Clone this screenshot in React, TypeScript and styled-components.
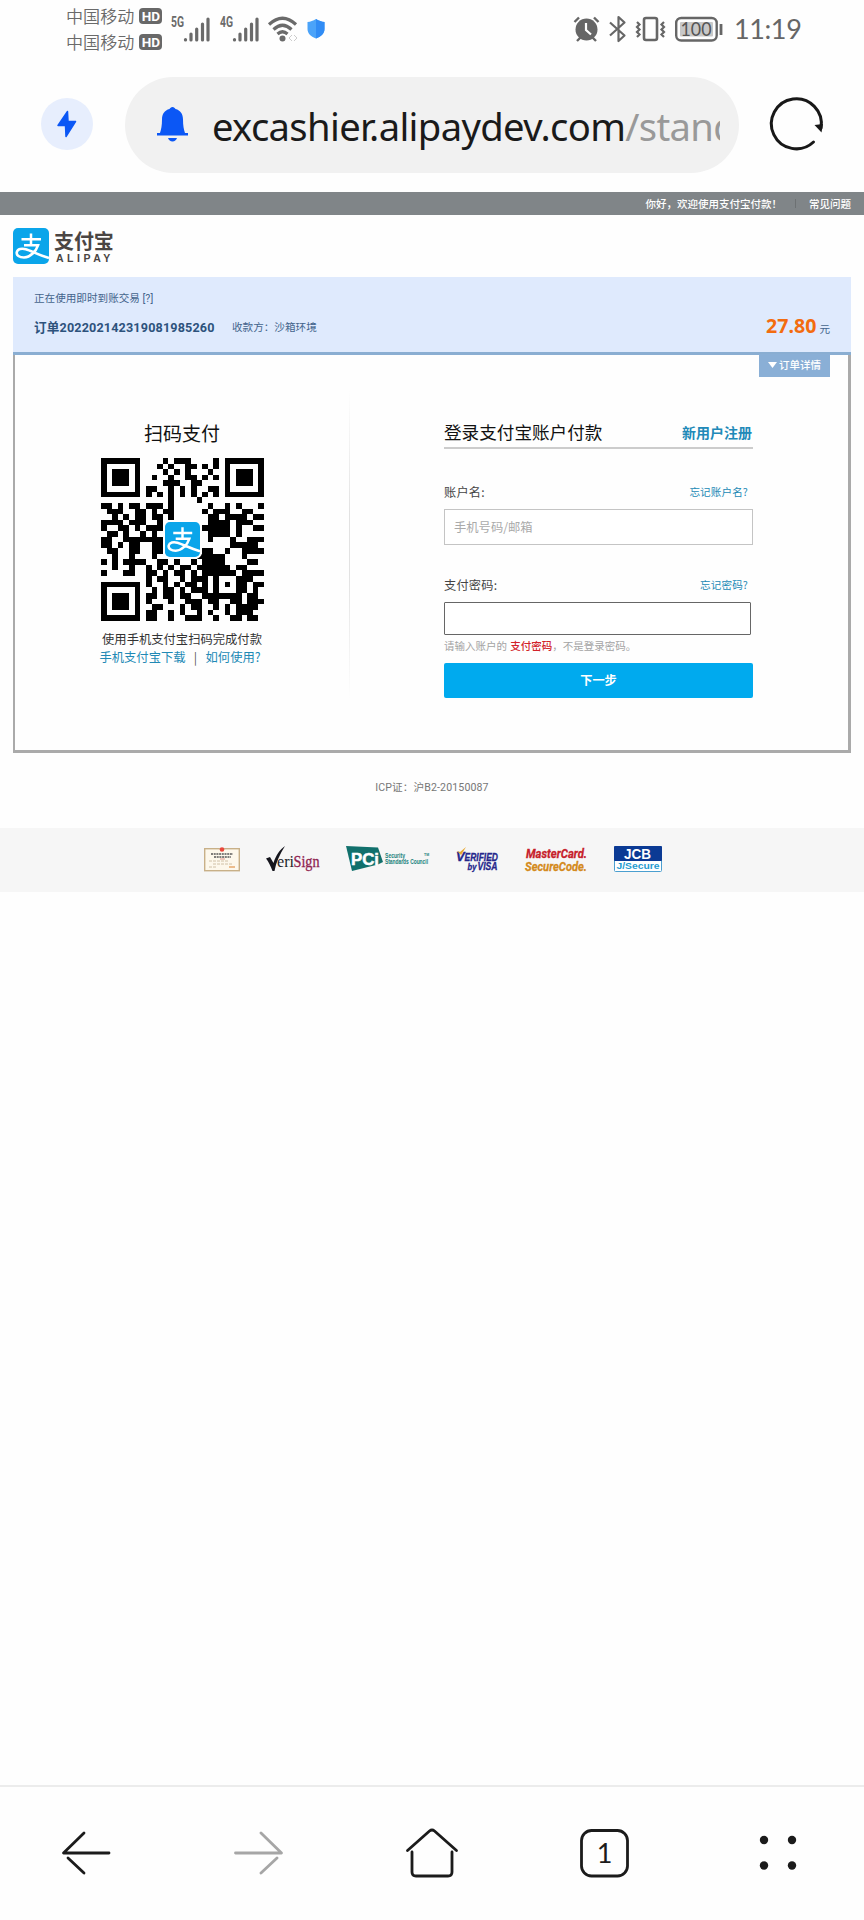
import React from 'react';
import styled, { createGlobalStyle } from 'styled-components';

const Global = createGlobalStyle`
  *, *::before, *::after { box-sizing: border-box; }
  body { margin: 0; background: #fefefe; font-family: Roboto, "Noto Sans CJK SC", sans-serif; color: #333; }
  a { text-decoration: none; color: inherit; }
  svg { display: block; flex: none; overflow: visible; }
`;

const Screen = styled.div`
  width: 864px;
  height: 1920px;
  display: flex;
  flex-direction: column;
  overflow: hidden;
  background: #fefefe;
`;

/* ---------- phone status bar ---------- */
const StatusBar = styled.header`
  height: 60px;
  padding: 2px 64px 0 66px;
  display: flex;
  justify-content: space-between;
  color: #6a6a6a;
`;
const StatusGroup = styled.div<{ $gap?: number }>`
  display: flex;
  gap: ${p => p.$gap ?? 8}px;
  height: 53px;
  align-items: center;
`;
const Carriers = styled.div`
  display: flex;
  flex-direction: column;
`;
const Carrier = styled.div`
  display: flex;
  align-items: center;
  gap: 5px;
  height: 26px;
  font: 350 17.1px "Noto Sans CJK SC", sans-serif;
`;
const HdBadge = styled.span`
  width: 23px;
  height: 16px;
  border-radius: 4px;
  background: #686868;
  color: #fff;
  font: 700 13.5px/16px Roboto, sans-serif;
  text-align: center;
`;
const Clock = styled.time`
  font: 400 27px/52px Lato, sans-serif;
  letter-spacing: -0.4px;
  color: #666;
  margin-left: 3px;
  width: 66px;
  white-space: nowrap;
`;

/* ---------- address bar ---------- */
const AddressBar = styled.div`
  height: 132px;
  padding: 0 40px 4px 41px;
  display: flex;
  align-items: center;
`;
const BoltButton = styled.button`
  width: 52px;
  height: 52px;
  flex: none;
  border: 0;
  padding: 0;
  border-radius: 50%;
  background: #e7eefd;
  display: grid;
  place-items: center;
`;
const UrlPill = styled.div`
  width: 614px;
  flex: none;
  height: 96px;
  margin: 1px 31px 0 32px;
  padding: 0 19px 0 32px;
  border-radius: 48px;
  background: #f1f1f1;
  display: flex;
  align-items: center;
  gap: 24px;
`;
const Url = styled.div`
  flex: 1;
  overflow: hidden;
  white-space: nowrap;
  font: 400 38.2px/60px "Noto Sans", sans-serif;
  letter-spacing: -0.65px;
  color: #1a1a1a;
  padding-top: 3px;
  span { color: #999; }
`;

/* ---------- web page ---------- */
const TopBar = styled.nav`
  height: 23px;
  background: #808588;
  color: #fff;
  display: flex;
  justify-content: flex-end;
  align-items: center;
  padding-right: 13px;
  font: 500 10.5px/23px "Noto Sans CJK SC", sans-serif;
`;
const TopDivider = styled.i`
  width: 1px;
  height: 9px;
  background: #6d7173;
  margin: 0 13px;
`;
const LogoRow = styled.div`
  height: 62px;
  padding: 13px 13px 0;
  display: flex;
  gap: 5px;
`;
const Wordmark = styled.div`
  display: flex;
  flex-direction: column;
  color: #4a4543;
  strong { font: 700 20px/26px "Noto Sans CJK SC", sans-serif; letter-spacing: -0.1px; }
  span { font: 700 10.5px/9px "Liberation Sans", sans-serif; letter-spacing: 3.5px; padding-left: 2px; }
`;
const Order = styled.section`
  margin: 0 13px;
  height: 78px;
  background: #dfeafd;
  border-bottom: 3px solid #8aaed2;
  padding: 12px 21px 0;
  color: #44648c;
  font: 400 10.6px/20px Roboto, "Noto Sans CJK SC", sans-serif;
`;
const OrderLine = styled.div`
  display: flex;
  align-items: center;
  height: 20px;
  margin-top: 9px;
`;
const OrderId = styled.strong`
  font-size: 12.6px;
  color: #2d527c;
  letter-spacing: 0.16px;
  width: 198px;
  white-space: nowrap;
`;
const Price = styled.div`
  margin-left: auto;
  display: flex;
  align-items: baseline;
  gap: 3px;
  strong { font: 700 19.6px/20px "Noto Sans", sans-serif; color: #f36c0f; }
`;
const Panel = styled.main`
  margin: 0 13px;
  height: 398px;
  border: solid #aaa;
  border-width: 0 3px 3px 2px;
  display: flex;
  background: #fefefe;
  position: relative;
`;
const DetailTab = styled.button`
  position: absolute;
  top: -1px;
  right: 18px;
  width: 71px;
  height: 23px;
  border: 0;
  padding: 0 0 2px;
  background: #8aafd6;
  color: #fff;
  display: flex;
  align-items: center;
  justify-content: center;
  gap: 2px;
  font: 500 10.5px/20px "Noto Sans CJK SC", sans-serif;
`;
const ScanColumn = styled.section`
  width: 334px;
  padding-top: 64px;
  display: flex;
  flex-direction: column;
  align-items: center;
  font: 400 12.3px/18px "Noto Sans CJK SC", sans-serif;
  h2 { margin: 0 0 11px; font-size: 19px; line-height: 28px; font-weight: 400; color: #111; }
  p { margin: 9px 0 0; }
`;
const BlueLinks = styled.div`
  color: #2189b5;
  display: flex;
  gap: 6px;
  padding-right: 4px;
  i { font-style: normal; color: #555; width: 8px; text-align: center; }
`;
const Divider = styled.div`
  width: 1px;
  margin: 34px 0 50px;
  background: linear-gradient(transparent, #e2e2e2 40%, #e2e2e2 60%, transparent);
`;
const Form = styled.form`
  width: 309px;
  margin-left: 94px;
  padding-top: 64px;
  display: flex;
  flex-direction: column;
`;
const FormHeading = styled.div`
  display: flex;
  justify-content: space-between;
  align-items: center;
  height: 30px;
  padding: 0 1px 3px 0;
  border-bottom: 2px solid #ccc;
  white-space: nowrap;
  h2 { margin: 0; font: 400 17.6px/26px "Noto Sans CJK SC", sans-serif; color: #111; }
  a { font: 700 14px/26px "Noto Sans CJK SC", sans-serif; color: #2189b8; }
`;
const FieldHead = styled.div<{ $top: number }>`
  margin-top: ${p => p.$top}px;
  height: 20px;
  display: flex;
  justify-content: space-between;
  align-items: center;
  padding-right: 5px;
  font: 400 12.2px/20px "Noto Sans CJK SC", sans-serif;
  color: #444;
  label { letter-spacing: 0.25px; }
  a { font-size: 10.6px; letter-spacing: 0.1px; padding-bottom: 1px; color: #2189b5; }
`;
const Input = styled.input<{ $password?: boolean }>`
  display: block;
  width: ${p => (p.$password ? 307 : 309)}px;
  height: ${p => (p.$password ? 33 : 36)}px;
  margin-top: 7px;
  padding: 0 9px;
  border: 1px solid ${p => (p.$password ? '#666' : '#c4c4c4')};
  border-radius: ${p => (p.$password ? 1 : 0)}px;
  outline: 0;
  background: #fff;
  font: 400 12.3px "Noto Sans CJK SC", sans-serif;
  &::placeholder { color: #aaa; opacity: 1; }
`;
const Hint = styled.div`
  height: 23px;
  font: 400 10.5px/21px "Noto Sans CJK SC", sans-serif;
  color: #a3a3a3;
  white-space: nowrap;
  b { font-weight: 500; color: #d2232a; margin-left: 1px; }
`;
const Submit = styled.button`
  margin-top: 5px;
  height: 35px;
  border: 0;
  border-radius: 2px;
  background: #00aaee;
  color: #fff;
  font: 700 12.2px/33px "Noto Sans CJK SC", sans-serif;
`;
const Icp = styled.div`
  height: 75px;
  line-height: 69px;
  text-align: center;
  font-family: Roboto, "Noto Sans CJK SC", sans-serif;
  font-size: 10.6px;
  letter-spacing: 0.12px;
  color: #777;
`;
const Partners = styled.footer`
  height: 64px;
  background: #f6f6f6;
  display: flex;
  justify-content: center;
  align-items: center;
  gap: 26px;
  padding: 0 0 2px 1px;
`;

/* ---------- browser toolbar ---------- */
const ToolBar = styled.nav`
  margin-top: auto;
  height: 135px;
  border-top: 2px solid #ececec;
  display: grid;
  grid-template-columns: repeat(5, 1fr);
  justify-items: center;
  padding-top: 40px;
`;

const QR_ROWS = [
  '#######....#.###....#.#######',
  '#.....#...#.#..##.#.#.#.....#',
  '#.###.#....#.#.#...#..#.###.#',
  '#.###.#..#..#..##.#.#.#.###.#',
  '#.###.#....###..##....#.###.#',
  '#.....#.##..#.#.#..##.#.....#',
  '#######.#.#.#.#.#.#.#.#######',
  '............#....#...........',
  '##.#.##.###.#......#..#.#...#',
  '.###..##.#.##.....#.###..##..',
  '..#.#.##.##.#......##.####.##',
  '####.###..#........####.###..',
  '#..##.#.###.......#####.#..##',
  '.##.#..#.#.........####.#....',
  '##..#######........#...#..###',
  '##.#.##..##............#####.',
  '.##..##..##.......##..#..####',
  '..#..#...#.......#####...#...',
  '#.#.####..##.#..#.####....##.',
  '..#..#..#.#.#.##.######.##...',
  '#...##..##.#.##.#.######.####',
  '........#.##..#.###.#...###..',
  '#######.#..#.#.##.#.#.#.##.##',
  '#.....#..#.##.#.###.#...##.#.',
  '#.###.#.##.##.##..#######.##.',
  '#.###.#.#...#..###.##..##.###',
  '#.###.#..##...#.##..#.#.####.',
  '#.....#.##..#.#..#.#..#.###..',
  '#######.##..#..###..#..##.##.',
];

const AlipayGlyph = ({ size }: { size: number }) => (
  <svg width={size} height={size} viewBox="0 0 36 36">
    <rect width="36" height="36" rx="5" fill="#0aa5ea" />
    <g fill="none" stroke="#fff">
      <path d="M8.500 11.300h19.500M18 5.500v12" strokeWidth="2.500" />
      <path d="M11 17.300h14c-2 6-7.500 12-14 12.200-4.800 0-7.800-2.200-7.200-5.300.8-3.300 5-4 9-2.900 6 1.700 12 5.500 23.200 8.700" strokeWidth="2.600" />
    </g>
  </svg>
);

const QrHolder = styled.div`
  width: 163px;
  height: 163px;
  display: grid;
  > * { grid-area: 1 / 1; place-self: center; }
`;
const QrLogo = styled.div`
  padding: 2px;
  border-radius: 7px;
  background: #fff;
`;
const QrCode = () => (
  <QrHolder>
    <svg width="163" height="163" viewBox="0 0 29 29" shapeRendering="crispEdges">
      <path
        fill="#000"
        d={QR_ROWS.map((row, y) => [...row].map((c, x) => (c === '#' ? `M${x} ${y}h1v1h-1z` : '')).join('')).join('')}
      />
    </svg>
    <QrLogo><AlipayGlyph size={35} /></QrLogo>
  </QrHolder>
);

const Signal = ({ label }: { label: string }) => (
  <svg width="41" height="28" viewBox="0 0 41 28">
    <text x="1" y="12" fontFamily="Roboto" fontWeight="700" fontSize="14.5" fill="#6a6a6a" textLength="13" lengthAdjust="spacingAndGlyphs">{label}</text>
    <g stroke="#6a6a6a" strokeWidth="3.200" strokeLinecap="round">
      <path d="M15.500 24.500v.5M21 19v6M26.700 14v11M32.500 9v16M38 4v21" />
    </g>
  </svg>
);

const Wifi = () => (
  <svg width="30" height="28" viewBox="0 0 30 28">
    <g fill="none" stroke="#6a6a6a" strokeWidth="3.200">
      <path d="M1 9.500Q14.500-3 28 9.500M5.500 14.500q9-8.500 18 0M9.500 19q5-4.500 10 0" />
    </g>
    <circle cx="14.500" cy="23.500" r="3" fill="#6a6a6a" />
    <path d="m24 20-3 3 3 3m2-6 3 3-3 3" fill="none" stroke="#ccc" />
  </svg>
);

const Shield = () => (
  <svg width="20" height="22" viewBox="0 0 20 22">
    <path d="M10 1c3 2 5.500 2.600 8.500 3v7c0 4.800-4 7.800-8.500 9.500C5.500 18.800 1.500 15.800 1.500 11V4C4.500 3.600 7 3 10 1z" fill="#4ba3f9" />
    <path d="M10 1c3 2 5.500 2.600 8.500 3v7c0 4.800-4 7.800-8.500 9.500z" fill="#318cf5" />
  </svg>
);

const Alarm = () => (
  <svg width="27" height="26" viewBox="0 0 27 26">
    <circle cx="13.500" cy="13.500" r="11" fill="#666" />
    <path d="m1.500 6 4.500-4.500M25.500 6 21 1.500M4 25l4-4m15 4-4-4" stroke="#666" strokeWidth="2.400" />
    <path d="M13 7v7l5 4.500" fill="none" stroke="#fff" strokeWidth="2.200" />
  </svg>
);

const Bluetooth = () => (
  <svg width="18" height="28" viewBox="0 0 18 28">
    <path d="m1 7.500 14.500 13L9.500 26V2l6 5.500L1 20.500" fill="none" stroke="#666" strokeWidth="2.200" strokeLinejoin="round" />
  </svg>
);

const Vibrate = () => (
  <svg width="31" height="26" viewBox="0 0 31 26">
    <rect x="9" y="2" width="13" height="22" rx="2" fill="none" stroke="#666" strokeWidth="2.600" />
    <path d="m2 6 2.500 2.500L2 11l2.500 2.500L2 16l2.500 2.500L2 21M29 6l-2.500 2.500L29 11l-2.500 2.500L29 16l-2.500 2.500L29 21" fill="none" stroke="#666" strokeWidth="2.200" />
  </svg>
);

const Battery = () => (
  <svg width="48" height="26" viewBox="0 0 48 26">
    <rect x="1.200" y="2" width="40.500" height="22.500" rx="5" fill="none" stroke="#666" strokeWidth="2.400" />
    <rect x="5" y="6" width="33" height="14.500" rx="1" fill="#c8c8c8" />
    <text x="5.500" y="20.300" fontFamily="Lato" fontSize="20" fill="#555" textLength="31" lengthAdjust="spacingAndGlyphs">100</text>
    <path d="M46 8v11" stroke="#666" strokeWidth="2.800" />
  </svg>
);

const Certificate = () => (
  <svg width="36" height="25" viewBox="0 0 36 25">
    <rect x=".7" y="1.700" width="34.600" height="22" fill="#fdf8ec" stroke="#c8b088" strokeWidth="1.400" />
    <circle cx="18" cy="2.500" r="2.300" fill="#e8483c" />
    <path d="M7 7h22M10 10h17" stroke="#555" strokeWidth="1.700" strokeDasharray="2 .7" />
    <path d="M5 14h19M9 17h20M5 20h8" stroke="#cbbba0" strokeWidth=".9" strokeDasharray="3 1" />
    <path d="M16 12h5" stroke="#e3998d" />
    <path d="M25 20h6" stroke="#e6a86c" strokeWidth="1.500" />
  </svg>
);

const VeriSign = () => (
  <svg width="54" height="27" viewBox="0 0 54 27">
    <path d="M0 12.500 4 11l3.500 6C10 9 14 3.500 19 0 14 8 10 16 8.500 25H6.500C4.500 20 2.500 15.500 0 12.500z" fill="#15151d" />
    <g fontFamily="Liberation Serif" fontSize="17">
      <text x="11" y="21" fill="#1f1e28" textLength="17" lengthAdjust="spacingAndGlyphs">eri</text>
      <text x="27.500" y="21" fill="#8f2350" stroke="#8f2350" strokeWidth=".3" textLength="26" lengthAdjust="spacingAndGlyphs">Sign</text>
    </g>
  </svg>
);

const Pci = () => (
  <svg width="84" height="26" viewBox="0 0 84 26">
    <path d="M0 0 32 1.500 37 16l-5 2.500L6 25z" fill="#11706c" />
    <text x="5" y="18.500" fill="#fff" stroke="#fff" strokeWidth=".5" fontFamily="Liberation Sans" fontWeight="700" fontSize="16" textLength="28" lengthAdjust="spacingAndGlyphs">PCi</text>
    <g fill="#19817c" fontFamily="Liberation Sans" fontWeight="700" fontSize="6.300">
      <text x="39" y="12" textLength="20" lengthAdjust="spacingAndGlyphs">Security</text>
      <text x="39" y="18" textLength="43" lengthAdjust="spacingAndGlyphs">Standards Council</text>
      <text x="78" y="10" fontSize="3.500">TM</text>
    </g>
  </svg>
);

const VerifiedVisa = () => (
  <svg width="43" height="25" viewBox="0 0 43 25">
    <g fill="#25278b" fontFamily="Liberation Sans" fontWeight="700" fontStyle="italic" stroke="#25278b" strokeWidth=".3">
      <text x="0" y="14" fontSize="13">V</text>
      <text x="8.500" y="14" fontSize="10" textLength="33.500" lengthAdjust="spacingAndGlyphs">ERIFIED</text>
      <text x="11.500" y="23" fontSize="9" textLength="9" lengthAdjust="spacingAndGlyphs">by</text>
      <text x="21.500" y="23" fontSize="10" textLength="20" lengthAdjust="spacingAndGlyphs">VISA</text>
    </g>
    <path d="m1 4 3 1 6-5-5 8z" fill="#e8a72c" />
  </svg>
);

const MasterCard = () => (
  <svg width="63" height="25" viewBox="0 0 63 25">
    <g fontFamily="Roboto" fontStyle="italic" fontWeight="700" strokeWidth=".3">
      <text x="1" y="11" fontSize="13.500" fill="#c7202b" stroke="#c7202b" textLength="61" lengthAdjust="spacingAndGlyphs">MasterCard.</text>
      <text x="0" y="23.500" fontSize="13.500" fill="#d48a1c" stroke="#d48a1c" textLength="62" lengthAdjust="spacingAndGlyphs">SecureCode.</text>
    </g>
  </svg>
);

const Jcb = () => (
  <svg width="48" height="26" viewBox="0 0 48 26">
    <rect x=".5" y=".5" width="47" height="25" rx="1" fill="#fff" stroke="#4b9fd0" />
    <rect width="48" height="15" rx="1" fill="#0b3a94" />
    <text x="10" y="13" fill="#fff" fontFamily="Liberation Sans" fontWeight="700" fontSize="15" textLength="27" lengthAdjust="spacingAndGlyphs">JCB</text>
    <text x="2.500" y="23" fill="#259bd0" fontFamily="Liberation Sans" fontWeight="700" fontSize="9" textLength="43" lengthAdjust="spacingAndGlyphs">J/Secure</text>
  </svg>
);

const Arrow = ({ forward }: { forward?: boolean }) => (
  <svg width="52" height="52" viewBox="0 0 52 52" fill="none" stroke={forward ? '#a6a6a6' : '#1b1b1b'} strokeWidth="2.800" strokeLinecap="round" strokeLinejoin="round">
    {forward ? <path d="M2.500 26H48.500L28 6M44 31 28 46" /> : <path d="M49 26H3.500L24 6M8 31 24 46" />}
  </svg>
);

export default function App() {
  return (
    <Screen>
      <Global />
      <StatusBar>
        <StatusGroup>
          <Carriers>
            <Carrier>中国移动<HdBadge>HD</HdBadge></Carrier>
            <Carrier>中国移动<HdBadge>HD</HdBadge></Carrier>
          </Carriers>
          <Signal label="5G" />
          <Signal label="4G" />
          <Wifi />
          <Shield />
        </StatusGroup>
        <StatusGroup $gap={8.5}>
          <Alarm />
          <Bluetooth />
          <Vibrate />
          <Battery />
          <Clock>11:19</Clock>
        </StatusGroup>
      </StatusBar>

      <AddressBar>
        <BoltButton aria-label="Boost">
          <svg width="20" height="28" viewBox="0 0 20 28">
            <path d="M10.500 1.500 1 15.500h7.500L9 26.500l9.500-15H11z" fill="#0b57f5" stroke="#0b57f5" strokeWidth="1.500" strokeLinejoin="round" />
          </svg>
        </BoltButton>
        <UrlPill>
          <svg width="31" height="35" viewBox="0 0 31 35" fill="#0b57f5">
            <path d="M15.500 0c1.500 0 2.300 1 3 2 5 1.300 7.500 5 7.500 10.500 0 6 .8 10 2 13.500h3v2.500H0V26h3c1.200-3.500 2-7.500 2-13.500C5 7 7.500 3.300 12.500 2c.7-1 1.500-2 3-2z" />
            <path d="M11 31h9c-.8 2.300-2.300 3.500-4.500 3.500S11.800 33.300 11 31z" />
          </svg>
          <Url>excashier.alipaydev.com<span>/standard</span></Url>
        </UrlPill>
        <svg width="54" height="54" viewBox="0 0 54 54">
          <path d="M43.500 45A25 25 0 1 1 51 31" fill="none" stroke="#181818" strokeWidth="3" strokeLinecap="round" />
          <path d="m44.500 28 8.500-1-1.500 8.500z" fill="#181818" />
        </svg>
      </AddressBar>

      <TopBar>
        <span>你好，欢迎使用支付宝付款！</span>
        <TopDivider />
        <a>常见问题</a>
      </TopBar>
      <LogoRow>
        <AlipayGlyph size={36} />
        <Wordmark><strong>支付宝</strong><span>ALIPAY</span></Wordmark>
      </LogoRow>
      <Order>
        <div>正在使用即时到账交易 [?]</div>
        <OrderLine>
          <OrderId>订单202202142319081985260</OrderId>
          <span>收款方：沙箱环境</span>
          <Price><strong>27.80</strong>元</Price>
        </OrderLine>
      </Order>
      <Panel>
        <DetailTab>
          <svg width="9" height="6" viewBox="0 0 9 6"><path d="M0 0h9L4.500 6z" fill="#fff" /></svg>
          订单详情
        </DetailTab>
        <ScanColumn>
          <h2>扫码支付</h2>
          <QrCode />
          <p>使用手机支付宝扫码完成付款</p>
          <BlueLinks><a>手机支付宝下载</a><i>|</i><a>如何使用?</a></BlueLinks>
        </ScanColumn>
        <Divider />
        <Form>
          <FormHeading><h2>登录支付宝账户付款</h2><a>新用户注册</a></FormHeading>
          <FieldHead $top={33}><label>账户名:</label><a>忘记账户名?</a></FieldHead>
          <Input placeholder="手机号码/邮箱" />
          <FieldHead $top={30}><label>支付密码:</label><a>忘记密码?</a></FieldHead>
          <Input $password type="password" />
          <Hint>请输入账户的 <b>支付密码</b>，不是登录密码。</Hint>
          <Submit type="button">下一步</Submit>
        </Form>
      </Panel>
      <Icp>ICP证：沪B2-20150087</Icp>
      <Partners>
        <Certificate />
        <VeriSign />
        <Pci />
        <VerifiedVisa />
        <MasterCard />
        <Jcb />
      </Partners>

      <ToolBar>
        <Arrow />
        <Arrow forward />
        <svg width="54" height="52" viewBox="0 0 54 52" fill="none" stroke="#1b1b1b" strokeWidth="2.800" strokeLinecap="round" strokeLinejoin="round">
          <path d="M2.500 23.500 24.500 4q2.500-2 5 0l22 19.500M7 25v20q0 4 4 4h32q4 0 4-4V25" />
        </svg>
        <svg width="52" height="52" viewBox="0 0 52 52">
          <rect x="2.500" y="3.500" width="46" height="45.500" rx="10" fill="none" stroke="#1b1b1b" strokeWidth="2.800" />
          <text x="25.500" y="35.500" textAnchor="middle" fontFamily="Lato" fontSize="27" fill="#1b1b1b">1</text>
        </svg>
        <svg width="52" height="52" viewBox="0 0 52 52" fill="#1b1b1b">
          <circle cx="12" cy="13" r="4.200" /><circle cx="40" cy="13" r="4.200" />
          <circle cx="12" cy="38.500" r="4.200" /><circle cx="40" cy="38.500" r="4.200" />
        </svg>
      </ToolBar>
    </Screen>
  );
}
